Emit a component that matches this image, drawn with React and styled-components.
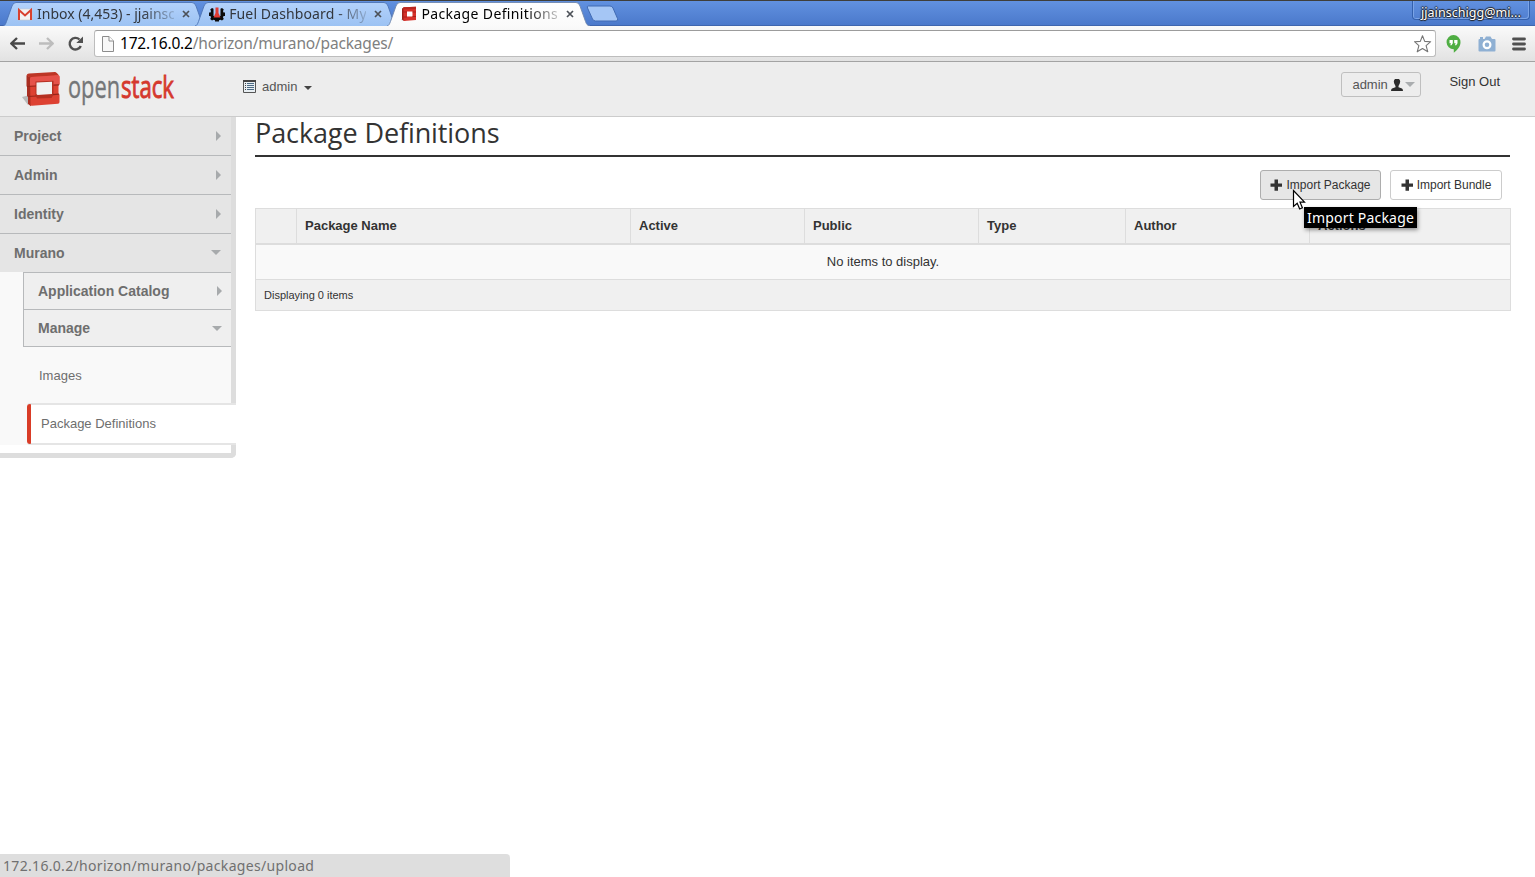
import React from 'react';
import styled, { createGlobalStyle } from 'styled-components';

const sans = '"Liberation Sans", Arial, sans-serif';
const ubuntu = '"Noto Sans", "Open Sans", sans-serif';

const GlobalStyle = createGlobalStyle`
  * { box-sizing: border-box; }
  html, body { margin: 0; height: 877px; overflow: hidden; background: #fff; }
  body { font-family: ${sans}; font-size: 13px; color: #333; }
  svg { display: block; flex: none; }
`;

const Window = styled.div`
  position: relative;
  width: 1535px;
  height: 877px;
  overflow: hidden;
  display: flex;
  flex-direction: column;
`;

/* Browser chrome */
const TabStrip = styled.div`
  height: 26px;
  flex: none;
  display: flex;
  align-items: flex-start;
  padding-left: 3px;
  border-top: 1px solid #3f3e3a;
  border-bottom: 1px solid #3f66ae;
  background: linear-gradient(#6191e0, #4b79cb);
`;

const Tab = styled.div`
  position: relative;
  z-index: ${p => (p.$active ? 2 : 1)};
  flex: none;
  width: 203px;
  height: 25px;
  margin-right: -10.8px;
  padding: 0 0 0 14px;
  display: flex;
  align-items: center;
`;

const TabShape = styled.svg`
  position: absolute;
  left: 0;
  top: 0;
  z-index: -1;
`;

const TabTitle = styled.span`
  width: 137px;
  margin: 0 8px 0 4px;
  overflow: hidden;
  white-space: nowrap;
  font: 14px/24px ${ubuntu};
  letter-spacing: ${p => p.$spacing || 0}px;
  color: ${p => (p.$active ? '#000' : '#33373d')};
  mask-image: linear-gradient(90deg, #000 105px, transparent 145px);
`;

const NewTab = styled.svg`
  margin: 4px 0 0 6px;
`;

const Profile = styled.div`
  margin: 0 5px 0 auto;
  width: 118px;
  height: 19px;
  padding-left: 8px;
  border: 1px solid #3461ad;
  border-top: 0;
  border-radius: 0 0 4px 4px;
  box-shadow: inset 1px 0 #7ba4e6, inset -1px -1px #7ba4e6;
  font: 12.5px/23px ${ubuntu};
  letter-spacing: 0.05px;
  color: #fff;
  text-shadow: 0 1px 1px #222, 1px 0 1px #222, -1px 0 1px #222, 0 -1px 1px #222;
  white-space: nowrap;
`;

const Toolbar = styled.div`
  height: 36px;
  flex: none;
  display: flex;
  align-items: center;
  padding: 0 9px 0 9px;
  border-bottom: 1px solid #a3a3a3;
  background: linear-gradient(#fafafa, #e2e2e2);
`;

const NavIcons = styled.div`
  width: 85px;
  display: flex;
  gap: 12px;
`;

const AddressBar = styled.div`
  width: 1342px;
  height: 27px;
  padding: 0 3px 0 7px;
  display: flex;
  align-items: center;
  border: 1px solid #bdbdbd;
  border-top-color: #9c9c9c;
  border-radius: 3px;
  background: #fff;
`;

const Url = styled.span`
  flex: 1;
  margin: -2px 0 0 6px;
  font: 15.5px/24px ${ubuntu};
  letter-spacing: -0.18px;
  color: #808080;
  b { font-weight: 400; color: #000; }
`;

const Extensions = styled.div`
  flex: 1;
  display: flex;
  align-items: center;
  justify-content: space-between;
  padding-left: 10px;
`;

/* Dashboard header */
const Header = styled.header`
  height: 55px;
  flex: none;
  display: flex;
  align-items: flex-start;
  padding: 0 35px 0 20px;
  border-bottom: 1px solid #ccc;
  background: #ededed;
`;

const ProjectPicker = styled.div`
  margin: 17px auto 0 63px;
  display: flex;
  align-items: center;
  gap: 6px;
  line-height: 15px;
  color: #555;
`;

const Caret = styled.i`
  width: 0;
  height: 0;
  border: ${p => p.$size}px solid transparent;
  ${p => (p.$right
    ? `border-left: ${p.$size}px solid ${p.$color}; border-right: 0;`
    : `border-top: ${p.$size}px solid ${p.$color}; border-bottom: 0;`)}
`;

const PickerCaret = styled(Caret)`
  margin: 2px 0 0 1px;
`;

const UserButton = styled.div`
  width: 80px;
  height: 25px;
  margin: 10px 28px 0 0;
  padding: 0 5px 0 10px;
  display: flex;
  align-items: center;
  justify-content: space-between;
  border: 1px solid #bfbfbf;
  border-radius: 3px;
  color: #555;
`;

const SignOut = styled.div`
  margin-top: 12px;
  line-height: 15px;
`;

/* Dashboard body */
const Body = styled.div`
  flex: 1;
  display: flex;
  align-items: flex-start;
`;

const Sidebar = styled.nav`
  width: 236px;
  height: 341px;
  border: solid #ddd;
  border-width: 0 5px 5px 0;
  border-radius: 0 0 5px 0;
`;

const MenuItem = styled.div`
  height: 39px;
  padding: 0 10px 1px 14px;
  display: flex;
  align-items: center;
  justify-content: space-between;
  border-bottom: 1px solid ${p => (p.$open ? '#e5e5e5' : '#b7b9bb')};
  background: #e5e5e5;
  font-size: 14px;
  font-weight: 700;
  color: #6e6e6e;
`;

const SubMenu = styled.div`
  height: 173px;
  margin-top: -1px;
  padding-left: 23px;
  background: #f9f9f9;
`;

const SubItem = styled.div`
  height: ${p => (p.$last ? 38 : 37)}px;
  padding: 0 9px 0 14px;
  display: flex;
  align-items: center;
  justify-content: space-between;
  border: solid #b7b9bb;
  border-width: 1px 0 ${p => (p.$last ? 1 : 0)}px 1px;
  background: #efefef;
  font-size: 14px;
  font-weight: 700;
  color: #6e6e6e;
`;

const PageLink = styled.div`
  height: 56px;
  padding: 21px 0 0 16px;
  line-height: 15px;
  color: #6e6e6e;
`;

const ActiveLink = styled.div`
  position: relative;
  width: 209px;
  height: 42px;
  margin-left: 4px;
  padding-left: 14px;
  border: solid #e5e5e5;
  border-width: 2px 0;
  border-radius: 3px 0 0 3px;
  background: #fff;
  line-height: 37px;
  color: #6e6e6e;
  &::before {
    content: '';
    position: absolute;
    left: 0;
    top: -1px;
    width: 4px;
    height: 40px;
    border-radius: 3px 1px 1px 3px;
    background: #d93c27;
  }
`;

const Main = styled.main`
  width: 1256px;
  margin-left: 19px;
`;

const Title = styled.h1`
  width: 1255px;
  height: 40px;
  margin: 0;
  border-bottom: 2px solid #333;
  font: 400 27px/32px "Open Sans", sans-serif;
  letter-spacing: -0.1px;
  color: #333;
`;

const Actions = styled.div`
  height: 51px;
  padding: 13px 9px 0 0;
  display: flex;
  justify-content: flex-end;
  align-items: flex-start;
  gap: 9px;
`;

const Button = styled.button`
  width: ${p => p.$width}px;
  height: 30px;
  padding: 0;
  display: flex;
  align-items: center;
  justify-content: center;
  gap: 4px;
  border: 1px solid ${p => (p.$hover ? '#adadad' : '#ccc')};
  border-radius: 3px;
  background: ${p => (p.$hover ? '#e6e6e6' : '#fff')};
  font: 12px ${sans};
  color: #333;
`;

const Table = styled.div`
  border: 1px solid #ddd;
`;

const HeadRow = styled.div`
  height: 36px;
  display: grid;
  grid-template-columns: 41px 334px 174px 174px 147px 184px 200px;
  border-bottom: 2px solid #ddd;
  background: #f0f0f0;
`;

const HeadCell = styled.div`
  padding-left: 8px;
  border-right: 1px solid #ddd;
  line-height: 34px;
  font-weight: 700;
  &:last-child { border-right: 0; }
`;

const EmptyRow = styled.div`
  height: 34px;
  background: #f9f9f9;
  line-height: 33px;
  text-align: center;
`;

const FootRow = styled.div`
  height: 31px;
  padding-left: 8px;
  border-top: 1px solid #ddd;
  background: #f0f0f0;
  font-size: 11px;
  line-height: 31px;
`;

/* Overlays */
const Tooltip = styled.div`
  position: absolute;
  left: 1304px;
  top: 207px;
  width: 113px;
  height: 21px;
  padding-left: 3px;
  background: #000;
  box-shadow: 1px 2px 4px rgba(0, 0, 0, 0.4);
  font: 14px/21px ${ubuntu};
  letter-spacing: 0.2px;
  white-space: nowrap;
  color: #fff;
`;

const Pointer = styled.svg`
  position: absolute;
  left: 1292px;
  top: 189px;
`;

const StatusBar = styled.div`
  position: absolute;
  left: 0;
  bottom: 0;
  width: 510px;
  height: 23px;
  padding-left: 3px;
  border-radius: 0 4px 0 0;
  background: #dedede;
  font: 14px/24px ${ubuntu};
  letter-spacing: 0.32px;
  color: #707070;
`;

const GmailIcon = () => (
  <svg width="16" height="14" viewBox="0 0 16 14">
    <path d="M1 2h14v11H1z" fill="#f3f3f3" stroke="#c9c9c9" strokeWidth=".6" />
    <path d="M2 13V3L8 8.500l6-5.500V13" fill="none" stroke="#d8412f" strokeWidth="2" />
  </svg>
);

const FuelIcon = () => (
  <svg width="16" height="16" viewBox="0 0 16 16">
    <path d="M0 6.500h1.500L2 5 1.200 3.500 3 2l1.500.8V10h7V2.800L13 2l1.800 1.500L14 5l.5 1.500H16v3.500h-1.500L14 11.500l.8 1.500-1.800 1.500-1.500-.8-1.500.6V15.500H6v-1.200l-1.500-.6-1.500.8L1.200 13 2 11.500 1.500 10H0z" fill="#0b0b0b" />
    <path d="M6.500 1.500h3V7l2 4.500h-7l2-4.500z" fill="#e23b32" />
  </svg>
);

const StackIcon = () => (
  <svg width="16" height="16" viewBox="0 0 16 16">
    <path d="M0 14l3-2 2 3z" fill="#aaa" />
    <path d="M1 2.500L3.500 1v14L1 13.500z" fill="#9e211a" />
    <path d="M2.500 1.300L15 .7V14L2.500 15z" fill="#d7322b" />
    <path d="M2.500 1.300L15 .7v2.200l-12.500.6z" fill="#b82720" />
    <path d="M6 5.500h5.500v5H6z" fill="#fff" />
    <path d="M2.500 6H6M11.500 6H15M2.500 11H6M11.500 10.500H15" stroke="#951b16" strokeWidth=".7" />
  </svg>
);

const CloseIcon = () => (
  <svg width="8" height="8" viewBox="0 0 8 8">
    <path d="M1 1l6 6M7 1L1 7" stroke="#4c5158" strokeWidth="1.700" />
  </svg>
);

const BrowserTab = ({ icon, title, active, spacing }) => (
  <Tab $active={active}>
    <TabShape width="203" height="25" viewBox="0 0 203 25">
      <defs>
        <linearGradient id={active ? 'tabOn' : 'tabOff'} x2="0" y2="1">
          <stop stopColor={active ? '#fff' : '#b3d2fb'} />
          <stop offset="1" stopColor={active ? '#fafafa' : '#9cc2f3'} />
        </linearGradient>
      </defs>
      <path
        d="M0 25C2 24.500 2.500 23 3.500 20.500L9 5Q10.200 1.500 13 1.500H189Q191.800 1.500 193 5L198.500 20.500C199.500 23 200 24.500 203 25"
        fill={`url(#${active ? 'tabOn' : 'tabOff'})`}
        stroke={active ? '#6f87ad' : '#4d74b4'}
        strokeWidth=".9"
      />
    </TabShape>
    {icon}
    <TabTitle $active={active} $spacing={spacing}>{title}</TabTitle>
    <CloseIcon />
  </Tab>
);

const BackIcon = ({ color, flip }) => (
  <svg width="17" height="16" viewBox="0 0 17 16">
    <path
      d="M16 7.500H2.500M8 2L2.200 7.500 8 13"
      transform={flip ? 'translate(17 0) scale(-1 1)' : undefined}
      fill="none" stroke={color} strokeWidth="2.400" strokeLinejoin="round"
    />
  </svg>
);

const ReloadIcon = () => (
  <svg width="17" height="16" viewBox="0 0 17 16">
    <path d="M13.800 10A5.800 5.800 0 1 1 12.500 3.500" fill="none" stroke="#505050" strokeWidth="2.400" />
    <path d="M16 .500v6.500H9.300z" fill="#505050" />
  </svg>
);

const PageIcon = () => (
  <svg width="12" height="16" viewBox="0 0 12 16">
    <path d="M.5.500h6.500l4.500 4.500v10.500H.5z" fill="#f8f8f8" stroke="#8c8c8c" />
    <path d="M7 .500V5h4.500" fill="#fff" stroke="#8c8c8c" />
  </svg>
);

const StarIcon = () => (
  <svg width="18" height="18" viewBox="0 0 18 18">
    <path
      d="M8.500 .8l2.200 5.600 6 .3-4.600 3.900 1.700 6.200L8.500 13.500l-5.300 3.300 1.700-6.200L.5 6.700l5.800-.3z"
      fill="#fff" stroke="#757575" strokeWidth="1.100" strokeLinejoin="round"
    />
  </svg>
);

const HangoutsIcon = () => (
  <svg width="15" height="18" viewBox="0 0 15 18">
    <path d="M7.500 0a7.200 7.200 0 0 1 7 7.200c0 4.500-3.500 8-6.700 10.500V14.200A7 7 0 0 1 7.500 0z" fill="#4fae43" />
    <path d="M3.500 5h3.300v3.200L5.500 10.300H4.200L5 8.200H3.500zM8.200 5h3.300v3.200l-1.300 2.100H8.900l.8-2.100H8.200z" fill="#fff" />
  </svg>
);

const CameraIcon = () => (
  <svg width="18" height="16" viewBox="0 0 18 16">
    <path d="M2 1h3v2h1.500L8 .500h4.500L14 3h2.500q1 0 1 1v10.500q0 1-1 1h-15q-1 0-1-1V4q0-1 1-1H2z" fill="#8fb0d3" />
    <circle cx="9" cy="8.800" r="3.400" fill="#8fb0d3" stroke="#fff" strokeWidth="2.200" />
  </svg>
);

const MenuIcon = () => (
  <svg width="14" height="14" viewBox="0 0 14 14">
    <path d="M1.500 2h11M1.500 7h11M1.500 12h11" stroke="#505050" strokeWidth="2.800" strokeLinecap="round" />
  </svg>
);

const LogoText = styled.text`
  font: 31px "Open Sans", sans-serif;
  fill: ${p => p.$color};
  stroke: ${p => p.$color};
  stroke-width: ${p => p.$weight};
`;

const Logo = () => (
  <svg width="160" height="54" viewBox="20 62 160 54">
    <path d="M22 97l6-1.500v9.500z" fill="#b9b9b9" />
    <path d="M26.500 75.500L31 77v29.300l-3-2.300V97l-1-1V87l-.5-1z" fill="#a92d20" />
    <path d="M26.500 75.500Q27 73.500 29 73.400L55 72q1.500 0 4 3.500L31 78z" fill="#bd3626" />
    <path d="M30 78.500q0-1.500 1.500-1.600L58 75.300q1.500 0 1.500 1.500v7.700l-1 .5v9l1 .5v7.500q0 1.500-1.500 1.700L32 105.800q-1.500.2-1.500-1.300z" fill="#dd4132" />
    <path d="M30 78.500q0-1.500 1.500-1.600L58 75.300q1.500 0 1.500 1.500v7.700l-29.500 1.300z" fill="#e5524a" />
    <path d="M35.500 81.500l18-.8v13.800l-2 3.500-14.500.5-1.500-3z" fill="#b53022" />
    <path d="M36.500 82.500l15.500-.7v12.200l-14.500 1-1-1z" fill="#f1f1f1" />
    <path d="M27 86.500l9-.5M53.500 85.200l5.500-.4M28 96.500l8-.5M53 94.700l6-.5" stroke="#96261b" strokeWidth="1.200" />
    <LogoText x="68" y="97.800" $color="#747678" $weight={0.4} textLength="52" lengthAdjust="spacingAndGlyphs">open</LogoText>
    <LogoText x="121" y="97.800" $color="#d5382d" $weight={0.9} textLength="53" lengthAdjust="spacingAndGlyphs">stack</LogoText>
  </svg>
);

const ListIcon = () => (
  <svg width="13" height="13" viewBox="0 0 13 13">
    <path d="M.500.500h12v12H.500z" fill="#e8eef2" stroke="#555" />
    <path d="M0 1h13" stroke="#444" strokeWidth="2" />
    <path d="M4 3.500H11M4 5.500H11M4 7.500H11M4 9.500H11" stroke="#4a6a85" />
    <path d="M2 3.500h1M2 5.500h1M2 7.500h1M2 9.500h1" stroke="#444" />
  </svg>
);

const UserIcon = () => (
  <svg width="12" height="12" viewBox="0 0 12 12">
    <path d="M4 0h4q1.200 1 1.200 2.500T7.500 7v1.200l3.500 1.300q1 .5 1 2.500H0q0-2 1-2.500l3.500-1.300V7Q2.800 4 2.800 2.500T4 0z" fill="#2b2b2b" />
  </svg>
);

const PlusIcon = () => (
  <svg width="12" height="12" viewBox="0 0 12 12">
    <path d="M4.500.500h3.500v4h4v3.200h-4v4H4.500v-4h-4V4.500h4z" fill="#333" />
  </svg>
);

const columns = ['', 'Package Name', 'Active', 'Public', 'Type', 'Author', 'Actions'];

export default function App() {
  return (
    <Window>
      <GlobalStyle />
      <TabStrip>
        <BrowserTab icon={<GmailIcon />} title="Inbox (4,453) - jjainschigg" spacing={0} />
        <BrowserTab icon={<FuelIcon />} title="Fuel Dashboard - My" spacing={0.12} />
        <BrowserTab icon={<StackIcon />} title="Package Definitions" spacing={0.36} active />
        <NewTab width="34" height="17" viewBox="0 0 34 17">
          <path d="M2.500 1H24q2 0 3 2l4.500 10.500q1 2.500-1.500 2.500H9.500q-2 0-3-2L1.500 3q-.8-2 1-2z" fill="#a5c6f5" stroke="#416bb3" />
        </NewTab>
        <Profile>jjainschigg@mi...</Profile>
      </TabStrip>
      <Toolbar>
        <NavIcons>
          <BackIcon color="#484848" />
          <BackIcon color="#bdbdbd" flip />
          <ReloadIcon />
        </NavIcons>
        <AddressBar>
          <PageIcon />
          <Url><b>172.16.0.2</b>/horizon/murano/packages/</Url>
          <StarIcon />
        </AddressBar>
        <Extensions>
          <HangoutsIcon />
          <CameraIcon />
          <MenuIcon />
        </Extensions>
      </Toolbar>
      <Header>
        <Logo />
        <ProjectPicker>
          <ListIcon />
          admin
          <PickerCaret $size={4} $color="#444" />
        </ProjectPicker>
        <UserButton>
          admin
          <UserIcon />
          <Caret $size={5} $color="#aaadaf" />
        </UserButton>
        <SignOut>Sign Out</SignOut>
      </Header>
      <Body>
        <Sidebar>
          <MenuItem>Project<Caret $size={5} $color="#a7aaac" $right /></MenuItem>
          <MenuItem>Admin<Caret $size={5} $color="#a7aaac" $right /></MenuItem>
          <MenuItem>Identity<Caret $size={5} $color="#a7aaac" $right /></MenuItem>
          <MenuItem $open>Murano<Caret $size={5} $color="#a7aaac" /></MenuItem>
          <SubMenu>
            <SubItem>Application Catalog<Caret $size={5} $color="#a7aaac" $right /></SubItem>
            <SubItem $last>Manage<Caret $size={5} $color="#a7aaac" /></SubItem>
            <PageLink>Images</PageLink>
            <ActiveLink>Package Definitions</ActiveLink>
          </SubMenu>
        </Sidebar>
        <Main>
          <Title>Package Definitions</Title>
          <Actions>
            <Button $width={121} $hover><PlusIcon />Import Package</Button>
            <Button $width={112}><PlusIcon />Import Bundle</Button>
          </Actions>
          <Table>
            <HeadRow>
              {columns.map(name => <HeadCell key={name}>{name}</HeadCell>)}
            </HeadRow>
            <EmptyRow>No items to display.</EmptyRow>
            <FootRow>Displaying 0 items</FootRow>
          </Table>
        </Main>
      </Body>
      <Tooltip>Import Package</Tooltip>
      <Pointer width="14" height="22" viewBox="0 0 14 22">
        <path d="M1.500 1.500v16l3.700-3.300 2.500 5.800 2.700-1.200L8 13.200h4.500z" fill="#fff" stroke="#000" strokeWidth="1.200" />
      </Pointer>
      <StatusBar>172.16.0.2/horizon/murano/packages/upload</StatusBar>
    </Window>
  );
}
